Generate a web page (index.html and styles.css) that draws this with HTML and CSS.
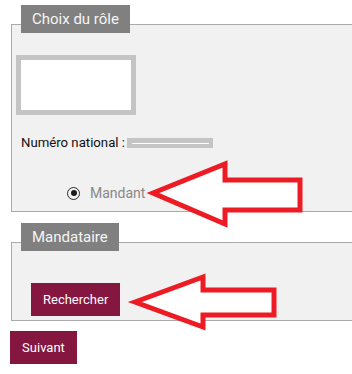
FILE: index.html
```html
<!DOCTYPE html>
<html lang="fr">
<head>
  <meta charset="UTF-8" />
  <title>Choix du rôle</title>
  <link rel="stylesheet" href="styles.css">
</head>
<body>
  <div class="page">
    <!-- bloc rôle -->
    <section class="group">
      <div class="tab">Choix du rôle</div>
      <div class="box role-box">
        <div class="photo"></div>
        <p class="national">Numéro national : <span class="masked"><span></span></span></p>
        <label class="radio-row">
          <span class="radio"></span>
          <span class="radio-label">Mandant</span>
        </label>
      </div>
    </section>

    <!-- bloc mandataire -->
    <section class="group group-second">
      <div class="tab">Mandataire</div>
      <div class="box agent-box">
        <button class="btn btn-search">Rechercher</button>
      </div>
    </section>

    <button class="btn btn-next">Suivant</button>
  </div>

  <!-- flèches d'annotation -->
  <svg class="arrows" width="352" height="374" viewBox="0 0 352 374">
    <polygon points="153,193 225,164 225,180 300,180 300,210 225,210 225,224" />
    <polygon points="135,302 203,277 203,290 274,290 274,315 203,315 203,327" />
  </svg>
</body>
</html>
```

FILE: styles.css
```css
body {
  margin: 0;
  font-family: Roboto, 'Liberation Sans', sans-serif;
  color: #111;
  background: #fff;
  overflow: hidden;
  position: relative;
  width: 352px;
  height: 374px;
}

.page {
  padding-top: 5px;
  padding-left: 11px;
}

.tab {
  display: inline-block;
  position: relative;
  z-index: 1;
  margin-left: 10px;
  height: 28px;
  line-height: 28px;
  padding: 0 11px;
  background-color: #808080;
  color: #f5f5f5;
  font-size: 15px;
  margin-bottom: -9px;
  vertical-align: top;
}

.box {
  border: 1px solid #aaa;
  border-right: none;
  background-color: #f1f1f1;
}

.role-box {
  padding: 30px 0 8px 4px;
}

.photo {
  width: 110px;
  height: 50px;
  border: 5px solid #c4c4c4;
  background: #fff;
}

.national {
  margin: 18px 0 0 5px;
  font-size: 13.2px;
  line-height: 20px;
  display: flex;
  align-items: center;
}

.masked {
  display: inline-flex;
  align-items: center;
  justify-content: center;
  width: 86px;
  height: 10px;
  margin-left: 2px;
  background-color: #c4c4c4;
}

.masked span {
  width: 77px;
  height: 1px;
  background: #fff;
}

.radio-row {
  display: flex;
  align-items: center;
  margin: 30px 0 0 51px;
  height: 20px;
}

.radio {
  box-sizing: border-box;
  width: 13px;
  height: 13px;
  border: 1.5px solid #2a2a2a;
  border-radius: 50%;
  display: flex;
  align-items: center;
  justify-content: center;
}

.radio::after {
  content: "";
  width: 6px;
  height: 6px;
  border-radius: 50%;
  background: #1a1a1a;
}

.radio-label {
  margin-left: 10px;
  font-size: 14px;
  color: #888;
}

.group-second {
  margin-top: 11px;
}

.agent-box {
  padding: 40px 0 4px 19px;
}

.btn {
  display: block;
  border: none;
  background-color: #85163f;
  color: #fff;
  font-family: Roboto, 'Liberation Sans', sans-serif;
  font-size: 13px;
  height: 33px;
  padding: 0 12px;
  cursor: pointer;
}

.btn-search {
  width: 89px;
}

.btn-next {
  margin: 10px 0 0 -1px;
  width: 67px;
}

.arrows {
  position: absolute;
  left: 0;
  top: 0;
  pointer-events: none;
}

.arrows polygon {
  fill: #fff;
  stroke: #ed1c24;
  stroke-width: 5;
  stroke-linejoin: miter;
}
```
